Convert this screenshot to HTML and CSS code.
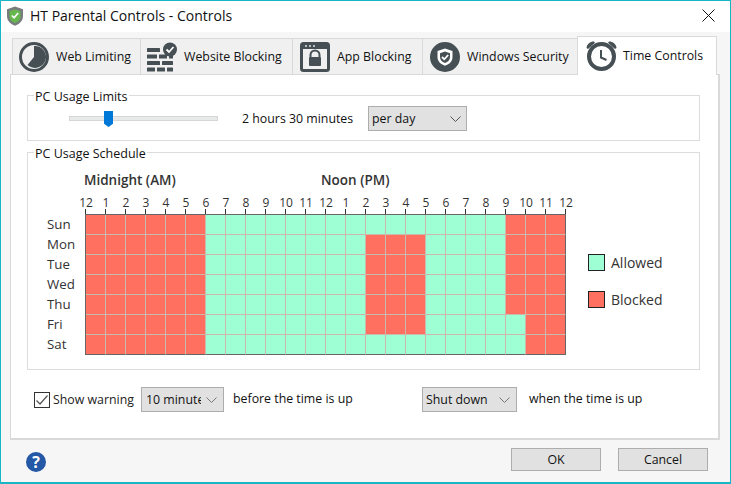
FILE: index.html
```html
<!DOCTYPE html>
<html lang="en">
<head>
<meta charset="utf-8">
<title>HT Parental Controls - Controls</title>
<link rel="stylesheet" href="styles.css">
</head>
<body>
<div class="window">
  <header class="titlebar">
    <svg class="app-icon" width="18" height="20" viewBox="0 0 18 20"><path d="M9 0.500 17 3.200V10c0 5-3.500 8-8 9.700C4.500 18 1 15 1 10V3.200Z" fill="#767d7c"/><path d="M9 3.500 14.500 5.300V10.200c0 3.400-2.400 5.400-5.500 6.700-3.100-1.300-5.500-3.300-5.500-6.700V5.300Z" fill="#66b84e"/><path d="M5.800 9.500 8.100 11.800 12.200 7" fill="none" stroke="#fff" stroke-width="1.700"/></svg>
    <span class="title">HT Parental Controls - Controls</span>
    <svg class="close" width="13" height="13" viewBox="0 0 13 13"><path d="M0.500 0.500 12.500 12.500M12.500 0.500 0.500 12.500" stroke="#111" stroke-width="1" fill="none"/></svg>
  </header>

  <nav class="tabs">
    <div class="tab tab-web">
      <svg width="30" height="30" viewBox="0 0 30 30"><circle cx="15" cy="15" r="13.500" fill="none" stroke="#454f54" stroke-width="3"/><path d="M15 15V4A11 11 0 1 1 8.500 23Z" fill="#454f54"/></svg>
      <span>Web Limiting</span>
    </div>
    <div class="tab tab-site">
      <svg width="30" height="30" viewBox="0 0 30 30" fill="#454f54"><rect x="0" y="6" width="13" height="4" rx=".5"/><rect x="0" y="12.500" width="10" height="4" rx=".5"/><rect x="12" y="12.500" width="8" height="4" rx=".5"/><rect x="0" y="19" width="13" height="4" rx=".5"/><rect x="15" y="19" width="11" height="4" rx=".5"/><rect x="22" y="12.500" width="4" height="4" rx=".5"/><rect x="0" y="25.500" width="8" height="4" rx=".5"/><rect x="10" y="25.500" width="8" height="4" rx=".5"/><rect x="20" y="25.500" width="6" height="4" rx=".5"/><circle cx="23" cy="7.500" r="7"/><path d="M19.500 7.500 22 10 26.500 5" fill="none" stroke="#fff" stroke-width="1.800"/></svg>
      <span>Website Blocking</span>
    </div>
    <div class="tab tab-app">
      <svg width="30" height="30" viewBox="0 0 30 30"><rect x="1.500" y="1.500" width="27" height="27" rx="2" fill="none" stroke="#454f54" stroke-width="3"/><rect x="1" y="1" width="28" height="6" fill="#454f54"/><path d="M5 4H7M9 4H11M13 4H15" stroke="#dfe2e2" stroke-width="1.500"/><path d="M10.500 15.500V13a4.500 4.500 0 0 1 9 0v2.500" fill="none" stroke="#454f54" stroke-width="2"/><rect x="9" y="15" width="12" height="9" rx="1" fill="#454f54"/></svg>
      <span>App Blocking</span>
    </div>
    <div class="tab tab-sec">
      <svg width="30" height="30" viewBox="0 0 30 30"><circle cx="15" cy="15" r="15" fill="#454f54"/><path d="M15 6.500 22.500 9V15c0 4.500-3 7-7.500 8.700C10.500 22 7.500 19.500 7.500 15V9Z" fill="#fff"/><path d="M15 9.500 20 11.200V15c0 3-2 4.800-5 6-3-1.200-5-3-5-6V11.200Z" fill="#454f54"/><path d="M12 15 14.300 17.300 18.200 13" fill="none" stroke="#fff" stroke-width="1.800"/></svg>
      <span>Windows Security</span>
    </div>
    <div class="tab tab-time active">
      <svg width="31" height="31" viewBox="0 0 31 31"><circle cx="15.500" cy="16.500" r="12.500" fill="none" stroke="#454f54" stroke-width="4"/><path d="M0.500 8C1 4 4 1.500 8 1.500L9 2.700 2 9Z" fill="#454f54"/><path d="M30.500 8C30 4 27 1.500 23 1.500L22 2.700 29 9Z" fill="#454f54"/><path d="M15 10V17.500L20.500 20" fill="none" stroke="#454f54" stroke-width="2"/></svg>
      <span>Time Controls</span>
    </div>
  </nav>

  <main class="panel">
    <fieldset class="group">
      <legend>PC Usage Limits</legend>
      <div class="limits">
        <div class="slider"><span class="thumb"></span></div>
        <span class="limit-value">2 hours 30 minutes</span>
        <div class="select sel-day"><span>per day</span><svg width="11" height="6" viewBox="0 0 11 6"><path d="M0.500 0.500 5.500 5.500 10.500 0.500" fill="none" stroke="#555"/></svg></div>
      </div>
    </fieldset>

    <fieldset class="group group-schedule">
      <legend>PC Usage Schedule</legend>
      <div class="schedule">
        <div class="days"><span>Sun</span><span>Mon</span><span>Tue</span><span>Wed</span><span>Thu</span><span>Fri</span><span>Sat</span></div>
        <div class="chart">
          <div class="periods"><span class="midnight">Midnight (AM)</span><span>Noon (PM)</span></div>
          <div class="hours"><span>12</span><span>1</span><span>2</span><span>3</span><span>4</span><span>5</span><span>6</span><span>7</span><span>8</span><span>9</span><span>10</span><span>11</span><span>12</span><span>1</span><span>2</span><span>3</span><span>4</span><span>5</span><span>6</span><span>7</span><span>8</span><span>9</span><span>10</span><span>11</span><span>12</span></div>
          <div class="ticks"></div>
          <div class="grid">
            <i class="b"></i><i class="b"></i><i class="b"></i><i class="b"></i><i class="b"></i><i class="b"></i><i></i><i></i><i></i><i></i><i></i><i></i><i></i><i></i><i></i><i></i><i></i><i></i><i></i><i></i><i></i><i class="b"></i><i class="b"></i><i class="b"></i>
            <i class="b"></i><i class="b"></i><i class="b"></i><i class="b"></i><i class="b"></i><i class="b"></i><i></i><i></i><i></i><i></i><i></i><i></i><i></i><i></i><i class="b"></i><i class="b"></i><i class="b"></i><i></i><i></i><i></i><i></i><i class="b"></i><i class="b"></i><i class="b"></i>
            <i class="b"></i><i class="b"></i><i class="b"></i><i class="b"></i><i class="b"></i><i class="b"></i><i></i><i></i><i></i><i></i><i></i><i></i><i></i><i></i><i class="b"></i><i class="b"></i><i class="b"></i><i></i><i></i><i></i><i></i><i class="b"></i><i class="b"></i><i class="b"></i>
            <i class="b"></i><i class="b"></i><i class="b"></i><i class="b"></i><i class="b"></i><i class="b"></i><i></i><i></i><i></i><i></i><i></i><i></i><i></i><i></i><i class="b"></i><i class="b"></i><i class="b"></i><i></i><i></i><i></i><i></i><i class="b"></i><i class="b"></i><i class="b"></i>
            <i class="b"></i><i class="b"></i><i class="b"></i><i class="b"></i><i class="b"></i><i class="b"></i><i></i><i></i><i></i><i></i><i></i><i></i><i></i><i></i><i class="b"></i><i class="b"></i><i class="b"></i><i></i><i></i><i></i><i></i><i class="b"></i><i class="b"></i><i class="b"></i>
            <i class="b"></i><i class="b"></i><i class="b"></i><i class="b"></i><i class="b"></i><i class="b"></i><i></i><i></i><i></i><i></i><i></i><i></i><i></i><i></i><i class="b"></i><i class="b"></i><i class="b"></i><i></i><i></i><i></i><i></i><i></i><i class="b"></i><i class="b"></i>
            <i class="b"></i><i class="b"></i><i class="b"></i><i class="b"></i><i class="b"></i><i class="b"></i><i></i><i></i><i></i><i></i><i></i><i></i><i></i><i></i><i></i><i></i><i></i><i></i><i></i><i></i><i></i><i></i><i class="b"></i><i class="b"></i>
          </div>
        </div>
        <div class="key">
          <div class="key-row"><span class="swatch swatch-allowed"></span><span>Allowed</span></div>
          <div class="key-row"><span class="swatch swatch-blocked"></span><span>Blocked</span></div>
        </div>
      </div>
    </fieldset>

    <div class="options">
      <span class="checkbox"><svg width="14" height="14" viewBox="0 0 14 14"><path d="M1.500 7.500 5 11 12.500 2.500" fill="none" stroke="#555" stroke-width="1.200"/></svg></span>
      <span class="check-label">Show warning</span>
      <div class="select sel-warn"><span class="clip">10 minutes</span><svg width="11" height="6" viewBox="0 0 11 6"><path d="M0.500 0.500 5.500 5.500 10.500 0.500" fill="none" stroke="#777"/></svg></div>
      <span class="before">before the time is up</span>
      <div class="select sel-action"><span>Shut down</span><svg width="11" height="6" viewBox="0 0 11 6"><path d="M0.500 0.500 5.500 5.500 10.500 0.500" fill="none" stroke="#777"/></svg></div>
      <span class="when">when the time is up</span>
    </div>
  </main>

  <footer class="footer">
    <span class="help">?</span>
    <button class="btn">OK</button>
    <button class="btn btn-cancel">Cancel</button>
  </footer>
</div>
</body>
</html>
```

FILE: styles.css
```css
* { box-sizing: border-box; }
html, body { margin: 0; padding: 0; }
body { font-family: "Open Sans", "Noto Sans", sans-serif; font-size: 12.35px; color: #111; }

.window {
  width: 731px; height: 484px;
  border: 1px solid #17b6c4; border-bottom-width: 2px;
  background: #f6f6f6;
  display: flex; flex-direction: column; overflow: hidden;
}

.titlebar { height: 31px; background: #fff; display: flex; align-items: center; padding: 0 0 2px 5px; flex: none; }
.app-icon { flex: none; }
.title { font-size: 14px; margin-left: 6px; }
.close { margin-left: auto; margin-right: 15px; }

.tabs { display: flex; align-items: flex-end; margin-left: 11px; height: 43px; flex: none; }
.tab {
  display: flex; align-items: center; height: 37px; padding-left: 6px;
  background: #f0f0f0; border: 1px solid #d9d9d9; border-right: 0;
  white-space: nowrap;
}
.tab svg { flex: none; margin-right: 7px; }
.tab-web { width: 128px; }
.tab-site { width: 152px; }
.tab-app { width: 130px; padding-left: 7px; }
.tab-sec { width: 155px; padding-left: 7px; }
.tab-time { width: 140px; height: 39px; background: #fff; border-right: 1px solid #d9d9d9; border-bottom: 0; position: relative; z-index: 1; padding-left: 8px; padding-bottom: 2px; }
.tab-time svg { margin-right: 6px; }

.panel {
  width: 710px; height: 366px; margin: -1px 0 0 9px; padding: 12px 18px 0 16px;
  background: #fff; border: 1px solid #d9d9d9; border-width: 1px 2px 2px 1px;
  flex: none;
}

.group { margin: 0; padding: 0; border: 1px solid #dcdcdc; min-width: 0; }
.group legend { margin-left: 6px; padding: 0 1px; font-size: 12.5px; line-height: 20px; height: 16px; }
.limits { display: flex; align-items: center; height: 37px; padding: 2px 0 8px 41px; }
.slider { width: 149px; height: 5px; background: #e7eae8; border: 1px solid #d6d6d6; position: relative; flex: none; }
.thumb {
  position: absolute; left: 34px; top: -6px; width: 9px; height: 16px;
  background: #0078d7; clip-path: polygon(0 0, 100% 0, 100% 80%, 50% 100%, 0 80%);
}
.limit-value { margin-left: 24px; width: 126px; flex: none; }
.select {
  display: flex; align-items: center; justify-content: space-between;
  height: 25px; padding: 0 6px 0 4px; background: #e1e1e1; border: 1px solid #adadad; flex: none;
}
.select svg { flex: none; }
.sel-day { width: 99px; padding-left: 3px; padding-right: 5px; }
.sel-warn { width: 83px; margin-left: 7px; }
.sel-action { width: 95px; margin-left: 67px; padding-left: 3px; }
.clip { width: 55px; overflow: hidden; white-space: nowrap; }

.group-schedule { margin-top: 3px; }
.schedule { display: flex; padding: 0 0 15px 19px; height: 209px; }
.days { width: 38px; display: flex; flex-direction: column; justify-content: flex-end; color: #333; font-size: 13.3px; flex: none; }
.days span { height: 20px; line-height: 20px; }
.chart { width: 481px; flex: none; }
.periods { display: flex; height: 36px; padding-top: 11px; margin-left: -1px; font-weight: 600; font-size: 13.5px; color: #333; }
.midnight { width: 237px; }
.hours { display: flex; height: 13px; margin-left: -9px; }
.hours span { width: 20px; flex: none; text-align: center; font-size: 12px; line-height: 13px; color: #333; }
.ticks { height: 5px; width: 481px; background: repeating-linear-gradient(to right, #333 0 1px, transparent 1px 20px); }
.grid {
  width: 481px; height: 141px; display: grid;
  grid-template-columns: repeat(24, 20px); grid-auto-rows: 20px;
  border: 1px solid #666; border-width: 1px 0 0 1px;
}
.grid i { display: block; background: #9dffd3; border: solid #cdb9ab; border-width: 0 1px 1px 0; }
.grid i.b { background: #ff7060; }
.grid i:nth-child(24n) { border-right-color: #666; }
.grid i:nth-last-child(-n+24) { border-bottom-color: #666; }

.key { margin-left: 22px; align-self: flex-end; padding-bottom: 46px; display: flex; flex-direction: column; gap: 20px; font-size: 14px; color: #333; }
.key-row { display: flex; align-items: center; height: 17px; gap: 6px; }
.swatch { width: 17px; height: 17px; border: 1px solid #222; }
.swatch-allowed { background: #9dffd3; }
.swatch-blocked { background: #ff7060; }

.options { display: flex; align-items: center; margin: 17px 0 0 7px; }
.checkbox { width: 16px; height: 16px; border: 1px solid #333; display: flex; align-items: center; justify-content: center; flex: none; }
.check-label { margin-left: 3px; width: 81px; color: #222; flex: none; white-space: nowrap; }
.before { margin-left: 9px; width: 122px; flex: none; white-space: nowrap; margin-top: -2px; }
.when { margin-left: 12px; white-space: nowrap; margin-top: -2px; }

.footer { display: flex; align-items: center; flex: 1; padding: 0 22px 0 25px; }
.help {
  width: 20px; height: 20px; border-radius: 50%; background: #2457a6; color: #fff;
  font-weight: 700; font-size: 16px; line-height: 20px; text-align: center; margin-right: auto; margin-top: 1px;
}
.btn {
  width: 90px; height: 23px; padding: 0; background: #e1e1e1; border: 1px solid #adadad; color: #111;
  font: inherit; margin-bottom: 3px;
}
.btn-cancel { margin-left: 17px; }
```
